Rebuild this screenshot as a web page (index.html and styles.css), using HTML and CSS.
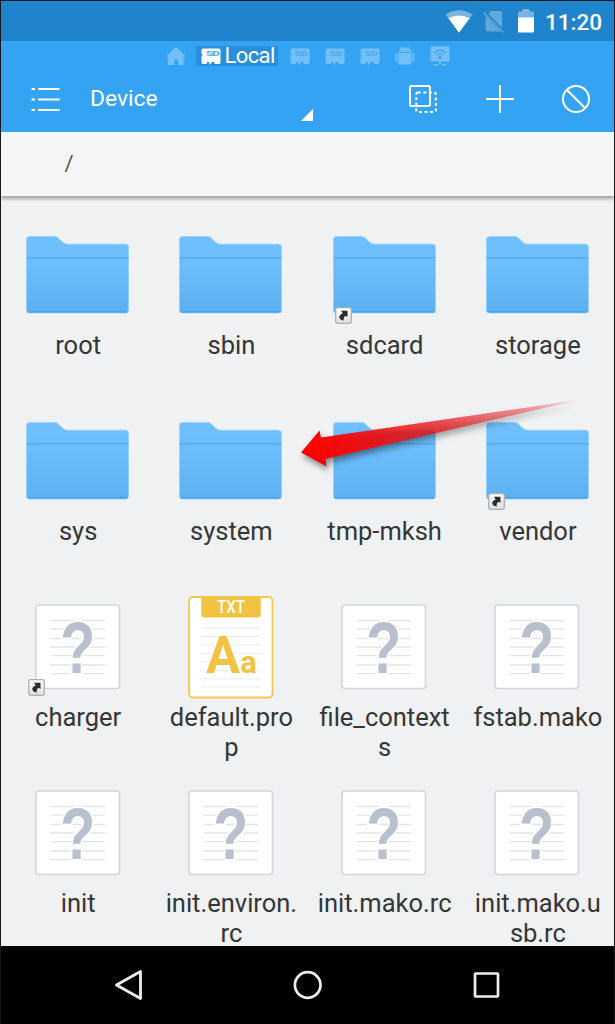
FILE: index.html
```html
<!DOCTYPE html>
<html lang="en">
<head>
<meta charset="utf-8">
<title>File manager</title>
<link rel="stylesheet" href="styles.css">
</head>
<body>
<svg class="defs" width="0" height="0" aria-hidden="true">
  <defs>
    <linearGradient id="folderFill" x1="0" y1="0" x2="0" y2="1">
      <stop offset="0" stop-color="#70c0fd"/><stop offset="0.35" stop-color="#6cbdfb"/><stop offset="1" stop-color="#5db0f1"/>
    </linearGradient>
    <linearGradient id="arrowFill" gradientUnits="userSpaceOnUse" x1="301" y1="453" x2="578" y2="400">
      <stop offset="0" stop-color="#ff0000"/><stop offset="0.12" stop-color="#fa0505" stop-opacity="0.97"/><stop offset="0.5" stop-color="#f01418" stop-opacity="0.74"/><stop offset="0.8" stop-color="#f03035" stop-opacity="0.5"/><stop offset="1" stop-color="#f04045" stop-opacity="0.15"/>
    </linearGradient>
    <linearGradient id="badgeFill" x1="0" y1="0" x2="0" y2="1">
      <stop offset="0" stop-color="#ffffff"/><stop offset="1" stop-color="#dedede"/>
    </linearGradient>
  </defs>
  <symbol id="folder" viewBox="0 0 103 78">
    <path d="M3.500 .5H28.500C34 .5 35 8.200 42 8.200H99.500Q102.500 8.200 102.500 11.200V74Q102.500 77 99.500 77H3.500Q.5 77 .5 74V3.500Q.5 .5 3.500 .5Z" fill="url(#folderFill)" stroke="#91cffa" stroke-width=".7"/>
    <path d="M.7 21.700H102.300" stroke="#55acef" stroke-width="1.500"/>
    <path d="M1.500 75.700H101.500" stroke="#4aa3ea" stroke-width="1.500"/>
  </symbol>
  <symbol id="unknown" viewBox="0 0 86 86">
    <rect x="1" y="1" width="83.500" height="83.500" rx="3" fill="#fff" stroke="#d2d7df" stroke-width="1.600"/>
    <path d="M15.500 16.500H70M15.500 25.200H70M15.500 34.500H70M15.500 43H70M15.500 51.700H70M15.500 61H70M15.500 69.700H70" stroke="#e4e5e7" stroke-width="1.300"/>
    <text x="42.800" y="69" textLength="35" lengthAdjust="spacingAndGlyphs" class="question">?</text>
  </symbol>
  <symbol id="sd" viewBox="0 0 20 17">
    <path d="M2 .5H18Q19.500 .5 19.500 2V14.500Q19.500 16 18 16H13.500V14H11L9 16.500H8V14H6V16H2Q.5 16 .5 14.500V8.500L1.500 7L.5 5.500V2Q.5 .5 2 .5Z" fill="currentColor"/>
    <text x="11.300" y="7.500" textLength="13" lengthAdjust="spacingAndGlyphs" class="sd-text">SD</text>
  </symbol>
  <symbol id="link" viewBox="0 0 17 17">
    <rect x=".7" y=".7" width="15.600" height="15.600" rx="2" fill="url(#badgeFill)" stroke="#adb0b3" stroke-width="1.300"/>
    <path d="M6 3.800H12.500V10L10.700 8.700Q8.200 10 8.700 13.500Q4 12.800 4.300 9.500Q4.700 7.200 7.700 6.400Z" fill="#2b2b2b"/>
  </symbol>
</svg>

<div class="phone">
  <header class="status">
    <svg class="wifi" viewBox="0 0 28 23"><path d="M.5 4.500Q14-4 27.500 4.500L14 22.500Z" fill="#79b5e0"/><path d="M3.300 8.300Q14 2.500 24.700 8.300L14 22.500Z" fill="#fff"/></svg>
    <svg class="nosim" viewBox="0 0 22 23"><path d="M7.500 1H17Q19 1 19 3V18L5.500 4ZM2.500 5.500L17.500 21.500H5Q2.500 21.500 2.500 19.500Z" fill="#62a8db"/><path d="M.7 2.500L20.500 22.500" stroke="#62a8db" stroke-width="1.500"/></svg>
    <svg class="battery" viewBox="0 0 16 24"><path d="M0 10V3.500Q0 2.500 1 2.500H4.500V0H11.500V2.500H15Q16 2.500 16 3.500V10Z" fill="#79b5e0"/><path d="M0 8.500H16V22.500Q16 23.500 15 23.500H1Q0 23.500 0 22.500Z" fill="#fff"/></svg>
    <span class="clock">11:20</span>
  </header>

  <nav class="tabs">
    <svg class="tab-home" viewBox="0 0 20 20"><path d="M10 .5L19.500 10.500H17.500V19H12V13.500H8.500V19H2V10.500H.5Z" fill="currentColor"/></svg>
    <div class="tab-active"><svg class="tab-sd"><use href="#sd"/></svg><span>Local</span></div>
    <svg class="tab-sd"><use href="#sd"/></svg>
    <svg class="tab-sd"><use href="#sd"/></svg>
    <svg class="tab-sd"><use href="#sd"/></svg>
    <svg class="tab-icon" viewBox="0 0 20 20"><path d="M4 6.500Q4 3.500 7 2L5.500 .5M16 6.500Q16 3.500 13 2L14.500 .5" fill="none" stroke="currentColor"/><path d="M3.500 6Q4 1.500 10 1.500T16.500 6ZM3.500 7H16.500V17Q16.500 18.500 15 18.500H5Q3.500 18.500 3.500 17ZM.5 7.500H2.500V15.500H.5ZM17.500 7.500H19.500V15.500H17.500Z" fill="currentColor"/><circle cx="7.200" cy="4.200" r=".7" fill="#35a3f3"/><circle cx="12.800" cy="4.200" r=".7" fill="#35a3f3"/></svg>
    <svg class="tab-icon" viewBox="0 0 20 20"><path d="M1 .5H19Q19.500 .5 19.500 1V15Q19.500 15.500 19 15.500H1Q.5 15.500 .5 15V1Q.5 .5 1 .5ZM9 15.500H11V18.500H9ZM3.500 18H8V19.500H3.500ZM12 18H16.500V19.500H12Z" fill="currentColor"/><path d="M4 7Q10 1 16 7M6.500 9.500Q10 6 13.500 9.500" fill="none" stroke="#35a3f3" stroke-width="1.100"/><circle cx="10" cy="11.500" r="1.500" fill="#35a3f3"/></svg>
  </nav>

  <div class="toolbar">
    <svg class="menu" viewBox="0 0 29 25"><path d="M.5 2H4M7 2H28.500M.5 12.500H4M7 12.500H28.500M.5 23H4M7 23H28.500" stroke="#fff" stroke-width="2"/></svg>
    <span class="device">Device</span>
    <svg class="corner" viewBox="0 0 12 12"><path d="M12 0V12H0Z" fill="#fff"/></svg>
    <svg class="action" viewBox="0 0 28 28"><rect x="1" y="1" width="20" height="20" rx="1.500" fill="none" stroke="#fff" stroke-width="2"/><rect x="7.300" y="7.500" width="19.500" height="19.500" rx="1.500" fill="none" stroke="#fff" stroke-width="2" stroke-dasharray="3 2.500"/></svg>
    <svg class="action" viewBox="0 0 28 28"><path d="M14 0V28M0 14H28" stroke="#fff" stroke-width="2"/></svg>
    <svg class="action" viewBox="0 0 28 28"><circle cx="14" cy="14" r="13" fill="none" stroke="#fff" stroke-width="2"/><path d="M5 5L23 23" stroke="#fff" stroke-width="2"/></svg>
  </div>

  <div class="path">/</div>

  <main class="files">
    <div class="item"><div class="icon"><svg class="folder"><use href="#folder"/></svg></div><span>root</span></div>
    <div class="item"><div class="icon"><svg class="folder"><use href="#folder"/></svg></div><span>sbin</span></div>
    <div class="item"><div class="icon"><svg class="folder"><use href="#folder"/></svg><svg class="badge"><use href="#link"/></svg></div><span>sdcard</span></div>
    <div class="item"><div class="icon"><svg class="folder"><use href="#folder"/></svg></div><span>storage</span></div>

    <div class="item"><div class="icon"><svg class="folder"><use href="#folder"/></svg></div><span>sys</span></div>
    <div class="item"><div class="icon"><svg class="folder"><use href="#folder"/></svg></div><span>system</span></div>
    <div class="item"><div class="icon"><svg class="folder"><use href="#folder"/></svg></div><span>tmp-mksh</span></div>
    <div class="item"><div class="icon"><svg class="folder"><use href="#folder"/></svg><svg class="badge"><use href="#link"/></svg></div><span>vendor</span></div>

    <div class="item"><div class="icon"><svg class="file"><use href="#unknown"/></svg><svg class="badge"><use href="#link"/></svg></div><span>charger</span></div>
    <div class="item"><div class="icon">
      <svg class="document" viewBox="0 0 86 103">
        <rect x="1" y="1" width="83.500" height="100.500" rx="4" fill="#fff" stroke="#f3c64d" stroke-width="1.800"/>
        <path d="M13.200 1H72.800V18Q72.800 21.500 69.300 21.500H16.700Q13.200 21.500 13.200 18Z" fill="#f2c243"/>
        <path d="M13.500 32H72.500M13.500 40.500H72.500M13.500 49H72.500M13.500 57.500H72.500M13.500 66H72.500M13.500 74.500H72.500M13.500 83H72.500M13.500 91H72.500" stroke="#ececec" stroke-width="1.200"/>
        <text x="43" y="17" textLength="28" lengthAdjust="spacingAndGlyphs" class="txt-tag">TXT</text>
        <text x="18" y="77" textLength="34" lengthAdjust="spacingAndGlyphs" class="txt-a-large">A</text>
        <text x="52.300" y="77" textLength="16.500" lengthAdjust="spacingAndGlyphs" class="txt-a-small">a</text>
      </svg>
    </div><span>default.pro<br>p</span></div>
    <div class="item"><div class="icon"><svg class="file"><use href="#unknown"/></svg></div><span>file_context<br>s</span></div>
    <div class="item"><div class="icon"><svg class="file"><use href="#unknown"/></svg></div><span>fstab.mako</span></div>

    <div class="item"><div class="icon"><svg class="file"><use href="#unknown"/></svg></div><span>init</span></div>
    <div class="item"><div class="icon"><svg class="file"><use href="#unknown"/></svg></div><span>init.environ.<br>rc</span></div>
    <div class="item"><div class="icon"><svg class="file"><use href="#unknown"/></svg></div><span>init.mako.rc</span></div>
    <div class="item"><div class="icon"><svg class="file"><use href="#unknown"/></svg></div><span>init.mako.u<br>sb.rc</span></div>
  </main>

  <footer class="navbar">
    <svg class="nav-icon" viewBox="0 0 30 30"><path d="M26.500 1.500V28.500L2.500 15Z" fill="none" stroke="#eee" stroke-width="2.800" stroke-linejoin="round"/></svg>
    <svg class="nav-icon" viewBox="0 0 30 30"><circle cx="14.700" cy="15" r="12.800" fill="none" stroke="#eee" stroke-width="2.700"/></svg>
    <svg class="nav-icon" viewBox="0 0 30 30"><rect x="3" y="3.500" width="23" height="23" rx=".8" fill="none" stroke="#eee" stroke-width="2.700"/></svg>
  </footer>

  <svg class="pointer" viewBox="0 0 615 1024"><path d="M301 452.500L319.500 430.500L321 437.500L578 400L325.500 459L326.500 466.500Z" fill="url(#arrowFill)"/></svg>
</div>
</body>
</html>
```
FILE: styles.css
```css
* { box-sizing: border-box; }
body { margin: 0; background: #101214; font-family: Roboto, sans-serif; }
svg { display: block; flex: none; overflow: visible; }
.defs { position: absolute; }
.phone {
  position: relative;
  width: 615px;
  height: 1024px;
  overflow: hidden;
  display: flex;
  flex-direction: column;
  border: 1px solid #15181b;
  border-bottom: 0;
  background: #eff1f3;
}

.status {
  flex: none;
  height: 40px;
  display: flex;
  align-items: center;
  justify-content: flex-end;
  padding: 0 11px 0 0;
  background: #2084cd;
}
.wifi { width: 28px; height: 23px; margin-right: 10px; }
.nosim { width: 22px; height: 23px; margin-right: 13px; }
.battery { width: 16px; height: 24px; margin-right: 11px; }
.clock { color: #fff; font-size: 22.5px; font-weight: 500; line-height: 26px; width: 58px; white-space: nowrap; padding-top: 1px; }

.tabs {
  flex: none;
  height: 25px;
  display: flex;
  align-items: flex-start;
  padding: 5px 0 0 164.5px;
  color: #73bff7;
  background: #35a3f3;
}
.tab-home { width: 20px; height: 20px; margin-right: 10px; }
.tab-sd { width: 20px; height: 17px; margin: 2px 15px 0 0; }
.tab-icon { width: 20px; height: 20px; margin: 0 15px 0 0; }
.tab-active {
  display: flex;
  width: 82px;
  height: 20px;
  margin-right: 12px;
  padding-left: 5px;
  color: #fff;
  background: #298fda;
  font-size: 22px;
  letter-spacing: -0.6px;
  line-height: 20px;
}
.tab-active .tab-sd { margin-right: 4px; }
.sd-text { font: 700 6.5px Roboto, sans-serif; text-anchor: middle; fill: #4caaf0; }

.toolbar {
  flex: none;
  height: 66px;
  display: flex;
  align-items: center;
  padding-left: 30px;
  background: #35a3f3;
}
.menu { width: 29px; height: 25px; }
.device { width: 211px; padding-left: 30px; color: #fff; font-size: 22.8px; line-height: 28px; }
.corner { width: 12px; height: 12px; margin: 32px 96px 0 30px; }
.device { flex: none; }
.corner { margin-left: 30px; }
.action { width: 28px; height: 28px; margin-right: 48.5px; }
.action:last-child { margin-right: 0; }

.path {
  flex: none;
  height: 64px;
  padding: 1px 0 0 63.5px;
  color: #555;
  background: #f5f6f8;
  font-size: 22px;
  line-height: 62px;
  box-shadow: 0 3px 3px rgba(0, 0, 0, .3);
}

.files {
  flex: none;
  height: 750px;
  overflow: hidden;
  display: grid;
  grid-template-columns: repeat(4, 1fr);
  grid-auto-rows: 186px;
  align-content: start;
  padding-top: 28px;
}
.path, .files { position: relative; }
.path { z-index: 1; }
.item { min-width: 0; text-align: center; color: #343638; font-size: 25.5px; line-height: 30.4px; }
.icon { position: relative; height: 106px; width: 103px; margin: 0 auto; }
.icon + span { display: block; white-space: nowrap; padding-left: 1px; }
.folder { width: 103px; height: 78px; position: relative; top: 12px; }
.file { width: 86px; height: 86px; margin: 0 auto; position: relative; top: 8px; }
.document { width: 86px; height: 103px; margin: 0 auto; }
.badge { position: absolute; left: 2px; top: 82.5px; width: 17px; height: 17px; }
.question { font: 700 72px "Liberation Sans", sans-serif; text-anchor: middle; fill: #b8c0cd; stroke: #fff; stroke-width: 4px; paint-order: stroke; }
.txt-tag { font: 500 17.500px Roboto, sans-serif; text-anchor: middle; fill: #fff; }
.txt-a-large { font: 700 52px Roboto, sans-serif; fill: #f2c243; stroke: #fff; stroke-width: 3px; paint-order: stroke; }
.txt-a-small { font: 700 31px Roboto, sans-serif; fill: #f2c243; stroke: #fff; stroke-width: 3px; paint-order: stroke; }

.navbar {
  flex: 1;
  display: flex;
  align-items: center;
  justify-content: center;
  gap: 149px;
  background: #000;
}
.nav-icon { width: 30px; height: 30px; }
.pointer {
  position: absolute;
  left: -1px;
  top: -1px;
  width: 615px;
  height: 1024px;
  z-index: 2;
  filter: drop-shadow(2px 4px 3px rgba(0, 0, 0, .45));
}
```
